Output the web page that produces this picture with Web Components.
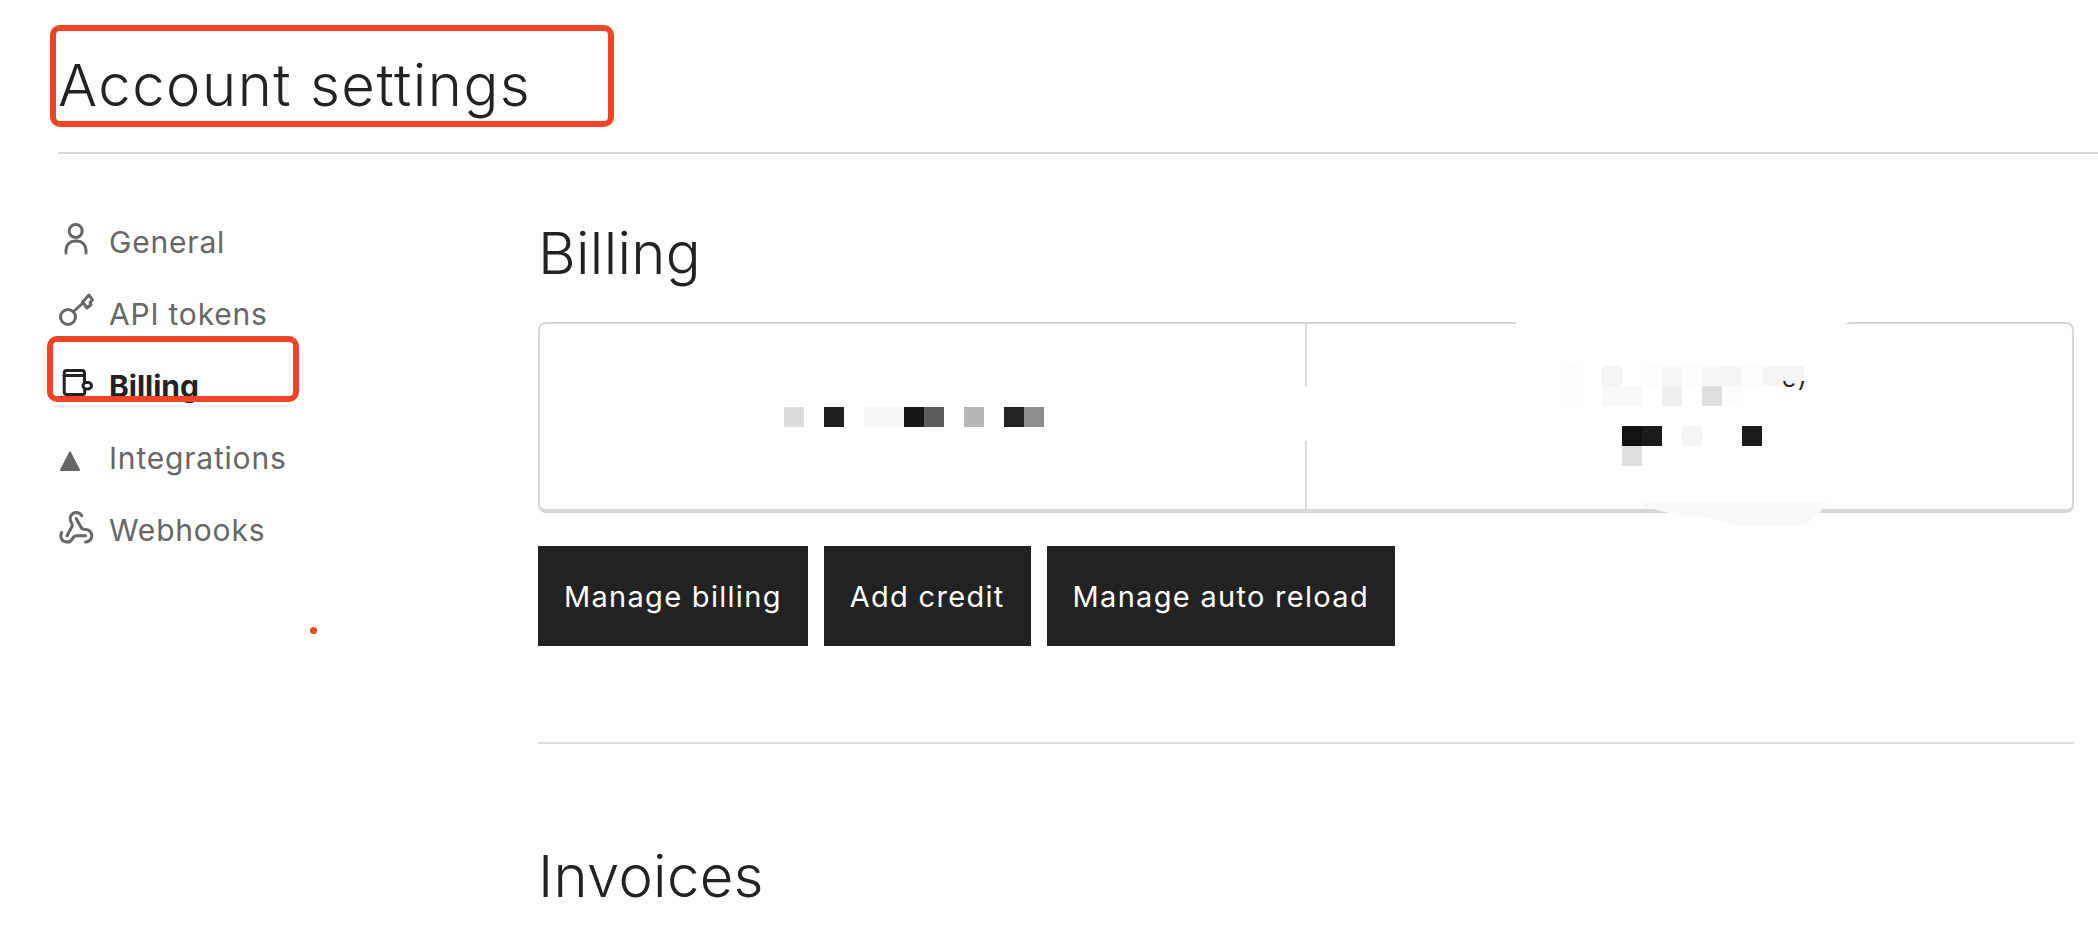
<!DOCTYPE html>
<html>
<head>
<meta charset="utf-8">
<title>Account settings</title>
<style>
  html, body { margin: 0; background: #fff; }
  body { position: relative; height: 942px; overflow: hidden; font-family: Inter, "Noto Sans", sans-serif; color: #222; }
</style>
</head>
<body>
<page-header>Account settings</page-header>
<div style="display:flex">
  <side-nav>
    <nav-item icon="user">General</nav-item>
    <nav-item icon="key">API tokens</nav-item>
    <nav-item icon="wallet" active>Billing</nav-item>
    <nav-item icon="triangle">Integrations</nav-item>
    <nav-item icon="webhook">Webhooks</nav-item>
  </side-nav>
  <main-panel>
    <section-title>Billing</section-title>
    <stat-card></stat-card>
    <button-row>
      <dark-button>Manage billing</dark-button>
      <dark-button>Add credit</dark-button>
      <dark-button>Manage auto reload</dark-button>
    </button-row>
    <hr-line></hr-line>
    <section-title class="invoices">Invoices</section-title>
  </main-panel>
</div>
<red-box style="left:50px;top:25px;width:564px;height:102px"></red-box>
<red-box style="left:47px;top:336px;width:252px;height:66px"></red-box>
<red-dot></red-dot>

<script>
const ICONS = {
  user: '<circle cx="17.700" cy="12" r="6.500" fill="none"/><path d="M8 36v-3a9 9 0 0 1 9-9h2a9 9 0 0 1 9 9v3" transform="translate(0 -2)" fill="none"/>',
  key: '<circle cx="10" cy="26" r="7.500" fill="none"/><path d="M15.500 20.500 25 12" fill="none"/><path d="M24.500 11 31 4l3.500 5-2.500 2.500 1 2-4 3.500z" fill="none"/>',
  wallet: '<path d="M26.500 19v-9a2.500 2.500 0 0 0-2.500-2.500H8.700a2.500 2.500 0 0 0-2.500 2.500v19a2.500 2.500 0 0 0 2.500 2.500h16a2 2 0 0 0 2-2v-3.500" fill="none"/><path d="M6.200 12.500h20.300" fill="none"/><rect x="25" y="19.500" width="8.500" height="6.500" rx="3.250" fill="#fff"/>',
  triangle: '<path d="M12 17.500 21 35H3Z" fill="#666" stroke-width="2"/>',
  webhook: '<g transform="translate(-.3 2.400) scale(1.55)" fill="none" stroke-width="1.950"><path d="M18 16.980h-5.990c-1.100 0-1.950.940-2.480 1.900A4 4 0 0 1 2 17c.010-.700.200-1.400.570-2"/><path d="m6 17 3.130-5.780c.530-.970.100-2.180-.500-3.100a4 4 0 1 1 6.890-4.060"/><path d="m12 6 3.130 5.730C15.660 12.700 16.900 13 18 13a4 4 0 0 1 0 8"/></g>'
};

class PageHeader extends HTMLElement {
  constructor() {
    super();
    this.attachShadow({ mode: 'open' });
    this.shadowRoot.innerHTML = `
      <style>
        :host { display: block; margin-left: 58px; height: 152px; border-bottom: 2px solid #d8d8d8; }
        h1 { margin: 0; padding-top: 50px; font: 350 58px/70px Inter, sans-serif; letter-spacing: 1.500px; color: #222; }
      </style>
      <h1><slot></slot></h1>`;
  }
}
customElements.define('page-header', PageHeader);

class SideNav extends HTMLElement {
  constructor() {
    super();
    this.attachShadow({ mode: 'open' });
    this.shadowRoot.innerHTML = `
      <style>
        :host { display: block; width: 480px; flex: none; margin-left: 58px; padding-top: 52px; box-sizing: border-box; }
      </style>
      <slot></slot>`;
  }
}
customElements.define('side-nav', SideNav);

class NavItem extends HTMLElement {
  constructor() {
    super();
    this.attachShadow({ mode: 'open' });
  }
  connectedCallback() {
    const active = this.hasAttribute('active');
    const stroke = active ? '#222' : '#666';
    this.shadowRoot.innerHTML = `
      <style>
        :host { display: flex; align-items: center; height: 72px; gap: 5px; font-size: 30px; letter-spacing: 0.800px; color: #666; }
        :host([active]) { color: #222; font-weight: 700; letter-spacing: 0; }
        svg { width: 46px; height: 46px; flex: none; }
      </style>
      <svg viewBox="0 0 46 46" stroke="${stroke}" stroke-width="3" stroke-linecap="round" stroke-linejoin="round">${ICONS[this.getAttribute('icon')]}</svg>
      <slot></slot>`;
  }
}
customElements.define('nav-item', NavItem);

class MainPanel extends HTMLElement {
  constructor() {
    super();
    this.attachShadow({ mode: 'open' });
    this.shadowRoot.innerHTML = `
      <style>
        :host { display: block; flex: 1; margin-right: 24px; padding-top: 64px; }
      </style>
      <slot></slot>`;
  }
}
customElements.define('main-panel', MainPanel);

class SectionTitle extends HTMLElement {
  constructor() {
    super();
    this.attachShadow({ mode: 'open' });
    this.shadowRoot.innerHTML = `
      <style>
        :host { display: block; font: 350 58px/70px Inter, sans-serif; letter-spacing: 0.300px; color: #222; height: 70px; }
        :host(.invoices) { margin-top: 97px; }
      </style>
      <slot></slot>`;
  }
}
customElements.define('section-title', SectionTitle);

class PixelBlur extends HTMLElement {
  constructor() {
    super();
    this.attachShadow({ mode: 'open' });
  }
  connectedCallback() {
    // cells are "col,row,colour" separated by spaces
    const cells = this.getAttribute('cells').split(' ').map(c => c.split(','));
    this.shadowRoot.innerHTML = `
      <style>
        :host { display: grid; grid-template-columns: repeat(${this.getAttribute('cols')}, 20px); grid-auto-rows: 20px; }
      </style>
      ${cells.map(([c, r, col]) => `<i style="grid-column:${+c + 1};grid-row:${+r + 1};background:#${col}"></i>`).join('')}`;
  }
}
customElements.define('pixel-blur', PixelBlur);

class StatCard extends HTMLElement {
  constructor() {
    super();
    this.attachShadow({ mode: 'open' });
    this.shadowRoot.innerHTML = `
      <style>
        :host { display: flex; position: relative; height: 191px; margin-top: 34px; box-sizing: border-box; border: 2px solid #d8d8d8; border-bottom-width: 4px; border-radius: 8px; }
        .left { width: 767px; flex: none; box-sizing: border-box; border-right: 2px solid #dcdcdc; display: flex; align-items: center; padding-left: 244px; }
        .right { flex: 1; padding: 42px 0 0 255px; }
        svg { position: absolute; left: -2px; top: -2px; width: 1536px; height: 210px; overflow: visible; }
        .scrap { position: absolute; left: 1242px; top: 43px; font: 400 24px/24px Inter, sans-serif; letter-spacing: 2px; color: #222; }
      </style>
      <div class="left">
        <pixel-blur cols="13" cells="0,0,dcdcdc 2,0,1f1f1f 4,0,f6f6f6 5,0,f6f6f6 6,0,171717 7,0,5c5c5c 9,0,b7b7b7 11,0,232323 12,0,8e8e8e"></pixel-blur>
      </div>
      <div class="right">
        <pixel-blur cols="12" cells="0,0,fcfcfc 2,0,f4f4f4 4,0,fcfcfc 5,0,f7f7f7 6,0,fcfcfc 7,0,f7f7f7 8,0,f5f5f5 9,0,fbfbfb 10,0,f5f5f5 11,0,f5f5f5 0,1,fdfdfd 2,1,f9f9f9 3,1,f9f9f9 5,1,efefef 7,1,dedede 8,1,fcfcfc 3,3,111111 4,3,1b1b1b 6,3,f5f5f5 9,3,1b1b1b 3,4,dedede"></pixel-blur>
      </div>
      <div class="scrap">e)</div>
      <svg viewBox="0 0 1536 210">
        <path d="M978 -4H1295L1312 0L1295 5H978Z" fill="#fff"/>
        <rect x="762" y="65" width="12" height="54" fill="#fff"/>
        <path d="M1105 180H1289L1267 204H1204Z" fill="#f9f9f9"/>
        <path d="M1105 184L1142 194H1280L1289 180H1105Z" fill="#f9f9f9"/>
        <rect x="1226" y="44" width="40" height="15" fill="#f5f5f5"/>
        <rect x="1266" y="44" width="8" height="15" fill="#fff"/>
      </svg>`;
  }
}
customElements.define('stat-card', StatCard);

class ButtonRow extends HTMLElement {
  constructor() {
    super();
    this.attachShadow({ mode: 'open' });
    this.shadowRoot.innerHTML = `
      <style>
        :host { display: flex; gap: 16px; margin-top: 33px; }
      </style>
      <slot></slot>`;
  }
}
customElements.define('button-row', ButtonRow);

class DarkButton extends HTMLElement {
  constructor() {
    super();
    this.attachShadow({ mode: 'open' });
    this.shadowRoot.innerHTML = `
      <style>
        :host { display: block; }
        button { display: block; height: 100px; padding: 0 26px; border: none; background: #222; color: #fff; font: 400 29px Inter, sans-serif; letter-spacing: 1.300px; white-space: nowrap; }
      </style>
      <button><slot></slot></button>`;
  }
}
customElements.define('dark-button', DarkButton);

class HrLine extends HTMLElement {
  constructor() {
    super();
    this.attachShadow({ mode: 'open' });
    this.shadowRoot.innerHTML = `
      <style>
        :host { display: block; height: 2px; margin-top: 96px; background: #e0e0e0; }
      </style>`;
  }
}
customElements.define('hr-line', HrLine);

class RedBox extends HTMLElement {
  constructor() {
    super();
    this.attachShadow({ mode: 'open' });
    this.shadowRoot.innerHTML = `
      <style>
        :host { display: block; position: absolute; box-sizing: border-box; border: 6px solid #ef4426; border-radius: 10px; }
      </style>`;
  }
}
customElements.define('red-box', RedBox);

class RedDot extends HTMLElement {
  constructor() {
    super();
    this.attachShadow({ mode: 'open' });
    this.shadowRoot.innerHTML = `
      <style>
        :host { display: block; position: absolute; left: 310px; top: 627px; width: 7px; height: 7px; border-radius: 50%; background: #ef4426; }
      </style>`;
  }
}
customElements.define('red-dot', RedDot);
</script>
</body>
</html>
